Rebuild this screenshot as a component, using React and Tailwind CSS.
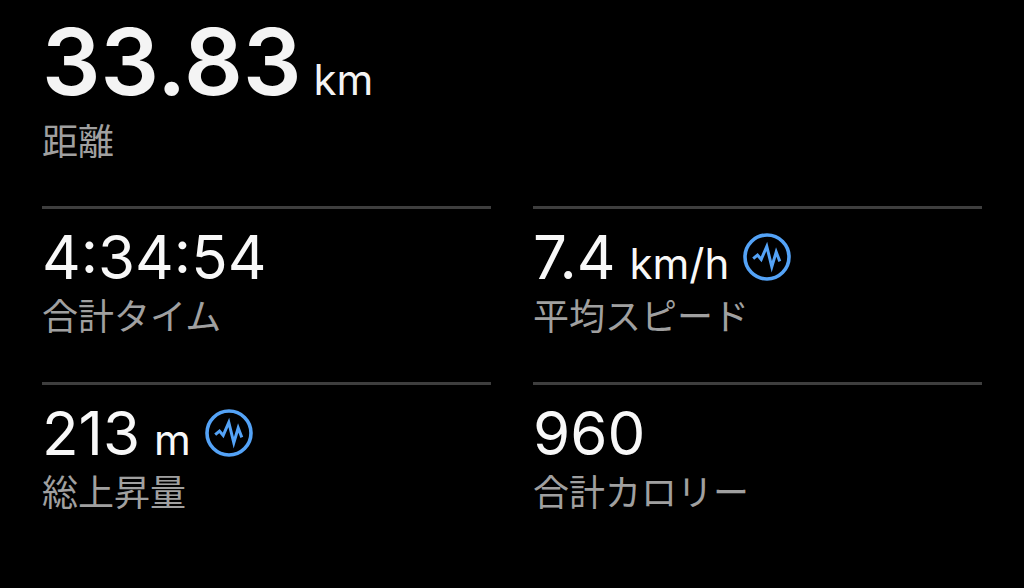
const ActivityIcon = () => (
    <svg viewBox="0 0 48 48" className="w-12 h-12 text-[#54a3f7]" fill="none" stroke="currentColor" aria-hidden="true">
        <circle cx="24" cy="24" r="22" strokeWidth="3.6" />
        <path
            d="M10.2 25.6L14.5 22L18.2 26.4L23.8 13.4L28.8 33.8L33.2 19L36.8 28.4"
            strokeWidth="3"
            strokeMiterlimit="6"
        />
    </svg>
);

const stats = [
    { value: '4:34:54', label: '合計タイム' },
    { value: '7.4', unit: 'km/h', label: '平均スピード', icon: true },
    { value: '213', unit: 'm', label: '総上昇量', icon: true },
    { value: '960', label: '合計カロリー' }
];

const Stat = ({ value, unit, label, icon }) => (
    <div className="flex flex-col border-t-3 border-[#3e3e3e] h-44 pt-4">
        <dt className="order-2 text-4xl leading-[56px] text-[#a0a0a0]">{label}</dt>
        <dd className="flex items-center gap-3.5 h-16">
            <span className="flex items-baseline gap-3.5 text-[#f8f8f8]">
                <span className="text-[60px] leading-16">{value}</span>
                {unit && <span className="text-[42px] leading-none">{unit}</span>}
            </span>
            {icon && <ActivityIcon />}
        </dd>
    </div>
);

const App = () => {
    return (
        <main className="min-h-screen bg-black px-[42px] pt-3.5 font-['Inter','Noto_Sans_CJK_JP',sans-serif]">
            <dl>
                <div className="flex flex-col h-48">
                    <dt className="order-2 text-4xl leading-[56px] text-[#a0a0a0] pt-1">距離</dt>
                    <dd className="flex items-baseline gap-3 text-[#f4f4f4]">
                        <span className="text-[92px] leading-24 font-semibold">33.83</span>
                        <span className="text-[42px] leading-none">km</span>
                    </dd>
                </div>
                <div className="grid grid-cols-2 gap-x-[42px]">
                    {stats.map((stat) => (
                        <Stat key={stat.label} {...stat} />
                    ))}
                </div>
            </dl>
        </main>
    );
};

export default App;
